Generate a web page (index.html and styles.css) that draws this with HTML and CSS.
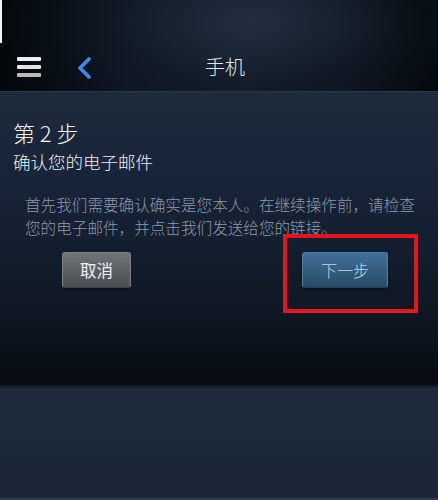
FILE: index.html
```html
<!DOCTYPE html>
<html lang="zh-CN">
<head>
<meta charset="utf-8">
<title>手机</title>
<link rel="stylesheet" href="styles.css">
</head>
<body>
<div class="screen">
  <header class="header">
    <div class="status"></div>
    <nav class="navbar">
      <div class="nav-left">
        <span class="menu"><i></i><i></i><i></i></span>
        <svg class="back" width="16" height="22" viewBox="0 0 16 22" aria-hidden="true">
          <polyline points="13,2 4,11 13,20" fill="none" stroke="#3b8be6" stroke-width="3.6" stroke-linecap="round" stroke-linejoin="round"/>
        </svg>
      </div>
      <div class="title">手机</div>
      <div class="nav-right"></div>
    </nav>
  </header>
  <main class="panel">
    <h1 class="step">第 2 步</h1>
    <h2 class="subtitle">确认您的电子邮件</h2>
    <p class="desc">首先我们需要确认确实是您本人。在继续操作前，请检查您的电子邮件，并点击我们发送给您的链接。</p>
    <div class="actions">
      <button class="btn btn-cancel">取消</button>
      <div class="highlight">
        <button class="btn btn-next">下一步</button>
      </div>
    </div>
  </main>
  <div class="lower"></div>
</div>
</body>
</html>
```
FILE: styles.css
```css
* { box-sizing: border-box; }
html, body {
  margin: 0;
  padding: 0;
  width: 438px;
  height: 500px;
  overflow: hidden;
  background: #1a2636;
  font-family: "Noto Sans CJK SC", "Noto Sans", sans-serif;
}
.screen {
  display: flex;
  flex-direction: column;
  height: 500px;
}
.header {
  position: relative;
  height: 92px;
  background:
    radial-gradient(ellipse 260px 110px at 58% 25%, rgba(40,54,72,0.75) 0%, rgba(22,32,45,0.4) 55%, rgba(0,0,0,0) 100%),
    linear-gradient(90deg, #03070b 0%, #0c1420 30%, #111b28 55%, #0a111b 80%, #02060a 100%);
  border-bottom: 1px solid #2a3848;
}
.status {
  height: 43px;
  position: relative;
}
.status::before {
  content: "";
  position: absolute;
  left: 0;
  top: 0;
  width: 2px;
  height: 43px;
  background: #f2f2f2;
}
.navbar {
  height: 48px;
  display: grid;
  grid-template-columns: 1fr auto 1fr;
  align-items: center;
}
.nav-left {
  display: flex;
  align-items: center;
  padding-left: 17px;
  gap: 35px;
}
.menu {
  display: flex;
  flex-direction: column;
  gap: 4px;
  width: 24px;
}
.menu i {
  display: block;
  height: 4px;
  border-radius: 1px;
  background: #f0f0f0;
}
.menu i:nth-child(2) { background: #e2e2e2; }
.menu i:nth-child(3) { background: #b9b9b9; }
.back { display: block; margin-top: 1px; }
.title {
  color: #e4e6e9;
  font-size: 20px;
  line-height: 24px;
  font-weight: 300;
  padding-left: 12px;
}
.panel {
  height: 293px;
  padding: 25px 0 0 0;
  background: linear-gradient(180deg, #1d2b3c 0%, #18243a 30%, #111b28 65%, #0a1019 92%, #070b10 100%);
}
.step {
  margin: 0;
  padding-left: 13px;
  font-size: 22px;
  line-height: 30px;
  font-weight: 300;
  color: #f4f5f6;
}
.subtitle {
  margin: 3px 0 0 0;
  padding-left: 13px;
  font-size: 17.5px;
  line-height: 24px;
  font-weight: 300;
  color: #eef0f2;
}
.desc {
  margin: 19px 0 0 25px;
  width: 395px;
  font-size: 15.6px;
  line-height: 22.5px;
  font-weight: 300;
  color: #8d99a6;
}
.actions {
  margin-top: 14px;
  display: flex;
  padding-left: 62px;
  gap: 171px;
}
.btn {
  display: block;
  height: 36px;
  padding: 0;
  border-radius: 3px;
  font-family: "Noto Sans CJK SC", sans-serif;
  font-size: 16.5px;
  font-weight: 400;
  line-height: 34px;
  text-align: center;
  cursor: pointer;
  box-shadow: 0 1px 2px rgba(0,0,0,0.55);
}
.btn-cancel {
  width: 69px;
  color: #f2f2f2;
  background: linear-gradient(180deg, #72767b 0%, #5c6065 50%, #4a4e53 100%);
  border: 1px solid #7e8287;
  border-bottom-color: #3f4347;
}
.btn-next {
  width: 86px;
  font-size: 16px;
  font-weight: 300;
  color: #c6d8e8;
  background: linear-gradient(180deg, #42709a 0%, #345d80 50%, #29496a 100%);
  border: 1px solid #4e7fa6;
  border-bottom-color: #22405c;
}
.highlight {
  position: relative;
}
.highlight::after {
  content: "";
  position: absolute;
  left: -19px;
  top: -18px;
  width: 127px;
  height: 71px;
  border: 4px solid #e3161e;
  pointer-events: none;
}
.lower {
  flex: 1;
  background: linear-gradient(180deg, #0d141d 0px, #1c2a3b 4px, #1c2a3b 40px, #1a2536 100%);
  border-bottom: 2px solid #2c3b4c;
}
```
